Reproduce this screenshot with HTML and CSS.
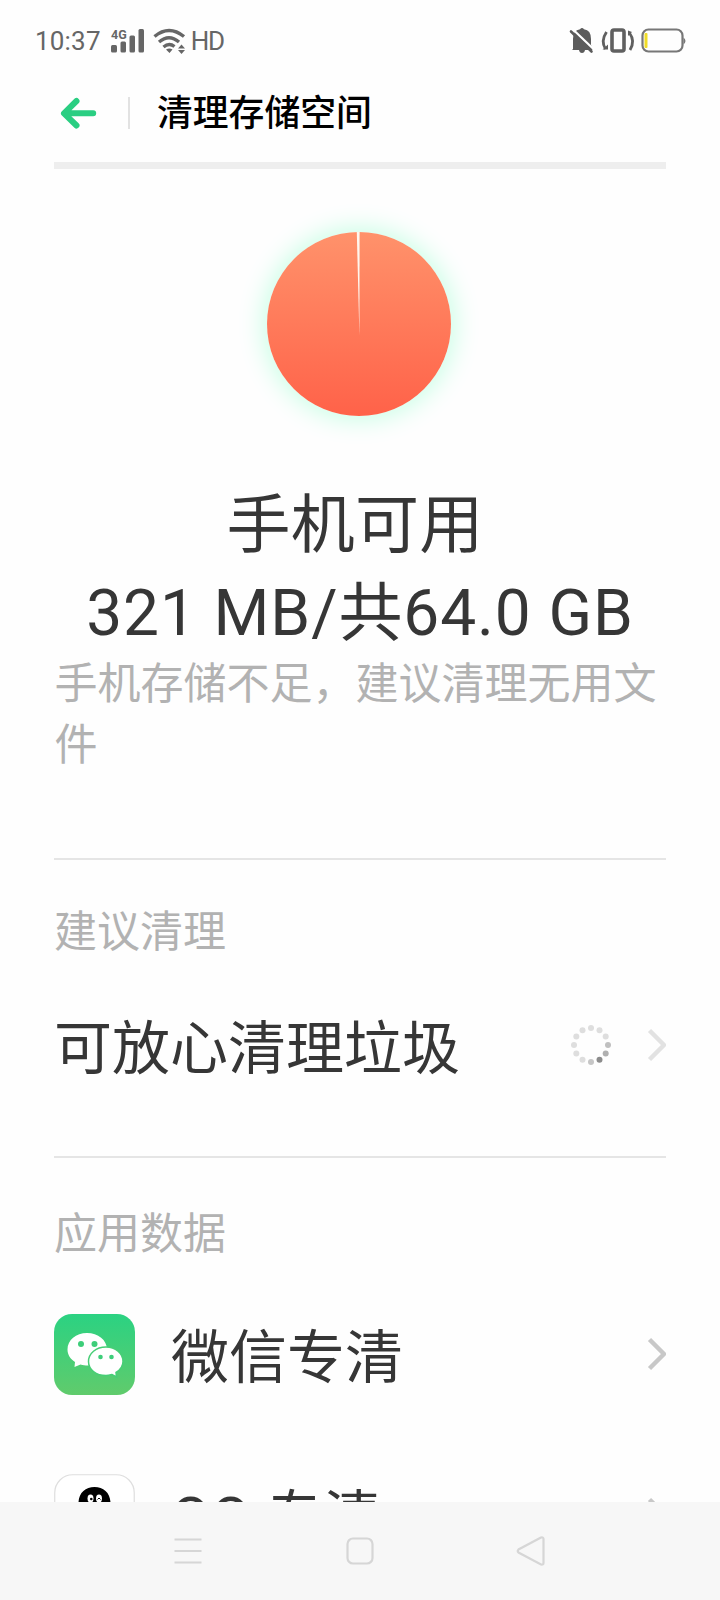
FILE: index.html
```html
<!DOCTYPE html>
<html lang="zh-CN">
<head>
<meta charset="utf-8">
<title>清理存储空间</title>
<link rel="stylesheet" href="styles.css">
</head>
<body>
<div class="screen">
  <header class="status">
    <span class="clock">10:37</span>
    <svg class="signal" width="34" height="26" viewBox="0 0 34 26" fill="#666">
      <rect x="0" y="17" width="6" height="7.500" rx="1.500"/><rect x="9.500" y="13.500" width="5.500" height="11" rx="1.500"/><rect x="18.500" y="7.500" width="5.500" height="17" rx="1.500"/><rect x="27.500" y="1" width="5.500" height="23.500" rx="1.500"/>
      <text x="0" y="10.500" class="net">4G</text>
    </svg>
    <svg class="wifi" width="34" height="26" viewBox="0 0 34 26" fill="none" stroke="#666" stroke-width="3.4">
      <path d="M1.500 8.500Q16 -3.500 31 8.500M6 14Q16 5.500 26 14M10.500 19Q16 14.500 21.500 18.500"/>
      <path d="M16.500 25l-3.500-3.500q3.500-2 6.500 0zM28.500 16.500l3.500 4h-7zM28.500 26l3.500-4h-7z" fill="#666" stroke="none"/>
    </svg>
    <span class="hd">HD</span>
    <span class="spacer"></span>
    <svg class="bell" width="24" height="28" viewBox="0 0 24 28" fill="#5c5c5c">
      <path d="M3 22V12Q3 3 10 2.200Q12 0 14 2.200Q21 3 21 12V18L22.500 21V23H15Q14.500 26 12 26Q9.500 26 9 23H2z"/>
      <path d="M3 2.500L24 22.500" stroke="#fff" stroke-width="2.200"/><path d="M1 4.500L21.500 24.500" stroke="#5c5c5c" stroke-width="2.600" stroke-linecap="round"/>
    </svg>
    <svg class="vibrate" width="34" height="28" viewBox="0 0 34 28" fill="none" stroke="#606060">
      <rect x="11" y="3" width="12" height="21" rx="2" stroke-width="3.600"/>
      <path d="M5.500 5Q-.5 14 4.500 22M28.500 6Q34.500 14 29 23" stroke-width="2.800"/>
      <path d="M1.500 22.500h5.500v-5zM27 3.500v5.500l4-4z" fill="#606060" stroke="none"/>
    </svg>
    <svg class="battery" width="46" height="26" viewBox="0 0 46 26" fill="none">
      <rect x="1.500" y="1.500" width="40" height="22" rx="6" stroke="#777" stroke-width="2.200"/>
      <path d="M42.500 9.500q4 3.500 0 7z" fill="#777"/><rect x="3.500" y="5" width="3" height="15" rx="1" fill="#f0dc28"/>
    </svg>
  </header>

  <nav class="topbar">
    <svg width="38" height="32" viewBox="0 0 38 32" fill="none" stroke="#2ace82" stroke-width="6" stroke-linecap="round" stroke-linejoin="round"><path d="M16.500 4L4 16.300L16.500 28.500M5 16.300H33.200"/></svg>
    <span class="rule"></span>
    <h1>清理存储空间</h1>
  </nav>

  <main class="content">
    <section class="summary">
      <svg class="pie" width="184" height="184" viewBox="0 0 184 184">
        <defs><linearGradient id="heat" x1="0" y1="0" x2="0" y2="1"><stop offset="0" stop-color="#ff926b"/><stop offset="1" stop-color="#ff6249"/></linearGradient></defs>
        <circle cx="92" cy="92" r="92" fill="url(#heat)"/><path d="M89.800 0H92.600L92.400 104z" fill="#fff6ee"/>
      </svg>
      <div class="amount"><p class="label">手机可用</p><p class="value">321 MB/共64.0 GB</p></div>
      <p class="hint">手机存储不足，建议清理无用文件</p>
    </section>

    <section class="group suggest">
      <h2>建议清理</h2>
      <div class="row">
        <span class="name">可放心清理垃圾</span>
        <svg class="spinner" width="42" height="42" viewBox="-21 -21 42 42">
          <g fill="#dedede"><circle cy="-17" r="3"/><circle cx="8.500" cy="-14.700" r="3"/><circle cx="14.700" cy="-8.500" r="3"/><circle cx="-8.500" cy="14.700" r="3"/><circle cx="-14.700" cy="8.500" r="3"/><circle cx="-17" r="3"/><circle cx="-14.700" cy="-8.500" r="3"/><circle cx="-8.500" cy="-14.700" r="3"/></g>
          <circle cx="17" r="3" fill="#c0c0c0"/><circle cx="14.700" cy="8.500" r="3" fill="#b0b0b0"/><circle cx="8.500" cy="14.700" r="3" fill="#8c8c8c"/><circle cy="17" r="3" fill="#c6c6c6"/>
        </svg>
        <svg class="chevron faint" width="20" height="34" viewBox="0 0 20 34"><path d="M3.500 2.500L18 17L3.500 31.500"/></svg>
      </div>
    </section>

    <section class="group apps">
      <h2>应用数据</h2>
      <div class="row">
        <svg class="app" width="81" height="81" viewBox="0 0 81 81">
          <defs><linearGradient id="green" x1="0" y1="0" x2="0" y2="1"><stop offset="0" stop-color="#2bd282"/><stop offset="1" stop-color="#60cb6c"/></linearGradient></defs>
          <rect width="81" height="81" rx="18" fill="url(#green)"/>
          <path d="M33 19C22 19 13.500 26 13.500 35.500C13.500 41 16.500 45 21 48L20.500 53L26.500 50.500C29 51.300 31 51.500 34 51.500C45 51.500 53 44 53 35.500C53 26 44 19 33 19z" fill="#fff"/>
          <path d="M52 33C42 33 34.500 39.500 34.500 47.500C34.500 55.500 42 61.500 52 61.500C54 61.500 56 61 58 60.500L62.500 63L62 58.500C66 56 69 52 69 47.500C69 39.500 61.500 33 52 33z" fill="#fff" stroke="#47ce76" stroke-width="1.500"/>
          <g fill="#3dce79"><circle cx="27" cy="30" r="3"/><circle cx="40.500" cy="30" r="3"/><circle cx="46.500" cy="43" r="2.300"/><circle cx="57.500" cy="43" r="2.300"/></g>
        </svg>
        <span class="name">微信专清</span>
        <svg class="chevron" width="20" height="34" viewBox="0 0 20 34"><path d="M3.500 2.500L18 17L3.500 31.500"/></svg>
      </div>
      <div class="row">
        <svg class="app" width="81" height="81" viewBox="0 0 81 81">
          <rect x=".75" y=".75" width="79.500" height="79.500" rx="18" fill="#fff" stroke="#dedede" stroke-width="1.200"/>
          <path d="M24.500 38V29C24.500 19 31.500 13 40.500 13S56.500 19 56.500 29V38C64 50 62 58 58 55C54 69 27 69 23 55C19 58 17 50 24.500 38z" fill="#000"/>
          <ellipse cx="36.500" cy="24.500" rx="3" ry="4" fill="#fff"/><ellipse cx="45" cy="24.500" rx="3" ry="4" fill="#fff"/><circle cx="37.300" cy="25" r="1.300"/><path d="M43.500 25.500q1.500-3 3 0" stroke="#000" fill="none"/>
        </svg>
        <span class="name">QQ 专清</span>
        <svg class="chevron" width="20" height="34" viewBox="0 0 20 34"><path d="M3.500 2.500L18 17L3.500 31.500"/></svg>
      </div>
    </section>
  </main>

  <footer class="navbar">
    <svg width="30" height="30" viewBox="0 0 30 30"><path d="M1.500 3.500H28.500M1.500 15H28.500M1.500 26.500H28.500"/></svg>
    <svg width="30" height="30" viewBox="0 0 30 30"><rect x="2.500" y="2.500" width="25" height="25" rx="5.500"/></svg>
    <svg width="30" height="30" viewBox="0 0 30 30"><path d="M24 1.500L1.500 13.500Q0 15 1.500 16.500L24 28.500Q26.500 29 26.500 27V3Q26.500 1 24 1.500z"/></svg>
  </footer>
</div>
</body>
</html>
```
FILE: styles.css
```css
* { box-sizing: border-box; margin: 0; padding: 0; }

body {
  background: #fefefe;
  font-family: Roboto, "Noto Sans CJK SC", sans-serif;
  color: #363636;
}

.screen {
  display: flex;
  flex-direction: column;
  width: 720px;
  height: 1600px;
  overflow: hidden;
}

svg { display: block; flex: none; overflow: visible; }

.status {
  display: flex;
  flex: none;
  align-items: center;
  height: 80px;
  padding: 2px 33px 0 35px;
  font-size: 26px;
  color: #666;
}
.clock { letter-spacing: 0.2px; }
.signal { margin-left: 10px; }
.net { font: bold 12.5px Roboto, sans-serif; }
.wifi { margin-left: 8px; }
.hd { margin-left: 4px; letter-spacing: -1.3px; }
.spacer { flex: 1; }
.vibrate { margin-left: 7px; }
.battery { margin-left: 6px; }

.topbar {
  display: flex;
  flex: none;
  align-items: center;
  height: 66px;
  padding-left: 60px;
}
.rule { width: 2px; height: 32px; margin: 0 27px 0 30px; background: #e2e2e2; }
.topbar h1 {
  padding-top: 2px;
  font-size: 35.8px;
  font-weight: 500;
  line-height: 44px;
  color: #000;
}

.content {
  flex: 1;
  min-height: 0;
  margin: 16px 54px 0;
  border-top: 7px solid #eee;
  overflow: hidden;
}

.summary {
  display: flex;
  flex-direction: column;
  height: 689px;
  padding-top: 63px;
}
.pie {
  align-self: center;
  margin-right: 2px;
  border-radius: 50%;
  box-shadow: 0 0 26px 3px #c6fee4;
}
.amount {
  display: flex;
  flex-direction: column;
  gap: 8px;
  margin-top: 70px;
  font-size: 64px;
  line-height: 80px;
  text-align: center;
}
.label { padding-right: 10px; letter-spacing: 0.3px; }
.value { letter-spacing: 0.9px; }
.hint { padding-left: 0.5px; font-size: 43px; line-height: 61px; color: #b2b2b2; }

.group { border-top: 2px solid #e5e5e5; }
.group h2 { font-size: 43px; font-weight: 400; line-height: 60px; color: #b2b2b2; }
.suggest { height: 298px; padding-top: 42px; }
.apps { padding-top: 46px; }

.row { display: flex; align-items: center; height: 160px; }
.suggest .row { height: 166px; }
.apps h2 { margin-bottom: 10px; }
.name { flex: 1; padding-top: 7px; font-size: 58px; line-height: 70px; }
.app { margin-right: 36px; }
.spinner { margin-right: 34px; }
.chevron { fill: none; stroke: #c8c8c8; stroke-width: 4.5px; stroke-linejoin: round; }
.faint { stroke: #e2e2e2; }

.navbar {
  display: flex;
  flex: none;
  justify-content: center;
  gap: 142px;
  height: 98px;
  padding-top: 34px;
  background: #f7f7f7;
}
.navbar svg { fill: none; stroke: #d6d6d6; stroke-width: 2.2px; }
```
